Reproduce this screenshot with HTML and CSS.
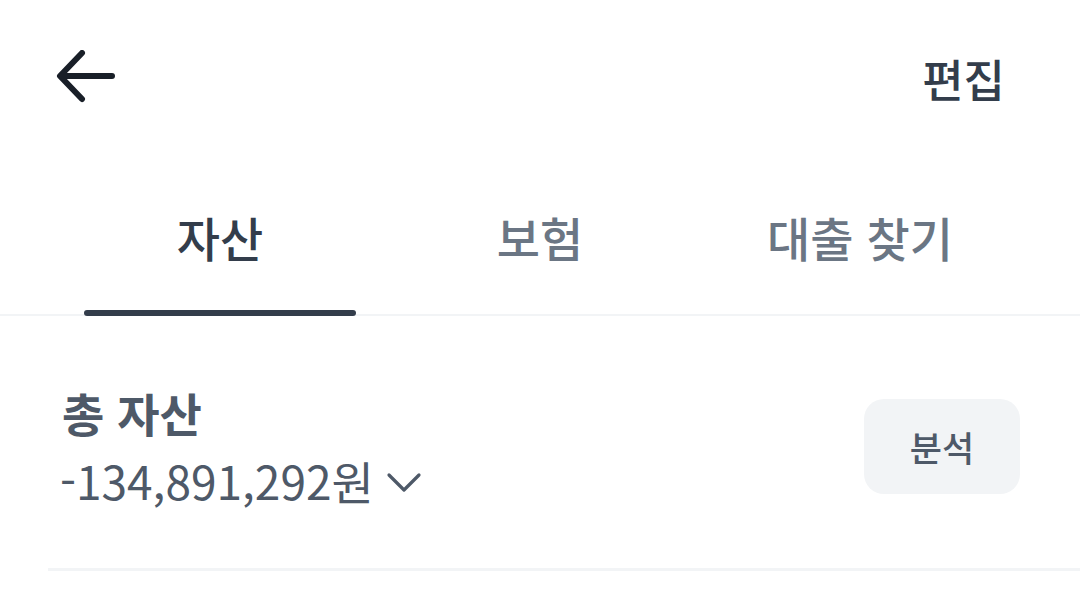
FILE: index.html
```html
<!DOCTYPE html>
<html lang="ko">
<head>
    <meta charset="UTF-8">
    <meta name="viewport" content="width=device-width, initial-scale=1.0">
    <title>자산</title>
    <link rel="stylesheet" href="styles.css">
</head>
<body>

    <!-- Top bar -->
    <header class="top-bar">
        <button class="back-btn" aria-label="뒤로">
            <svg width="60" height="56" viewBox="0 0 60 56" fill="none">
                <path d="M26 3 L4 26 L26 49" stroke="#191f28" stroke-width="6" stroke-linecap="round" stroke-linejoin="round"/>
                <path d="M6 26 H56" stroke="#191f28" stroke-width="6" stroke-linecap="round"/>
            </svg>
        </button>
        <span class="edit-btn">편집</span>
    </header>

    <!-- Tabs -->
    <nav class="tabs">
        <div class="tab active">
            <span class="tab-label">자산</span>
            <div class="tab-indicator"></div>
        </div>
        <div class="tab">
            <span class="tab-label">보험</span>
            <div class="tab-indicator"></div>
        </div>
        <div class="tab">
            <span class="tab-label">대출 찾기</span>
            <div class="tab-indicator"></div>
        </div>
    </nav>

    <!-- Total assets -->
    <section class="summary">
        <div class="summary-text">
            <h2 class="summary-title">총 자산</h2>
            <div class="summary-amount">
                -134,891,292원
                <svg class="chevron" width="36" height="22" viewBox="0 0 36 22" fill="none">
                    <path d="M3 4 L18 19 L33 4" stroke="#4e5968" stroke-width="3.2" stroke-linecap="round" stroke-linejoin="round"/>
                </svg>
            </div>
        </div>
        <button class="analyze-btn">분석</button>
    </section>

    <div class="divider"></div>

</body>
</html>
```

FILE: styles.css
```css
/* Base */
body {
    font-family: "Noto Sans CJK KR", "Noto Sans", sans-serif;
    background-color: #fff;
    margin: 0;
    padding: 0;
    color: #333d4b;
    width: 1080px;
    overflow: hidden;
}

button {
    font-family: inherit;
    border: none;
    background: none;
    padding: 0;
    cursor: pointer;
}

/* Top bar */
.top-bar {
    height: 156px;
    display: flex;
    align-items: center;
    justify-content: space-between;
    padding: 0 75px 0 56px;
}

.back-btn {
    display: flex;
}

.edit-btn {
    font-size: 45px;
    font-weight: 500;
    color: #333d4b;
}

/* Tabs */
.tabs {
    display: flex;
    padding: 0 60px;
    border-bottom: 2px solid #f2f4f6;
}

.tab {
    flex: 1;
    display: flex;
    flex-direction: column;
    align-items: center;
    padding-top: 48px;
}

.tab-label {
    font-size: 47px;
    font-weight: 500;
    line-height: 66px;
    color: #6b7684;
}

.tab-indicator {
    align-self: stretch;
    margin: 40px 24px -2px;
    height: 6px;
    border-radius: 3px;
}

.tab.active .tab-label {
    color: #333d4b;
}

.tab.active .tab-indicator {
    background-color: #333d4b;
}

/* Summary */
.summary {
    display: flex;
    align-items: center;
    justify-content: space-between;
    padding: 64px 60px 0 62px;
    height: 196px;
    box-sizing: border-box;
}

.summary-text {
    display: flex;
    flex-direction: column;
}

.summary-title {
    margin: 0;
    font-size: 46px;
    font-weight: 700;
    line-height: 62px;
    color: #4e5968;
}

.summary-amount {
    display: flex;
    align-items: center;
    gap: 12px;
    font-size: 46px;
    line-height: 62px;
    color: #4e5968;
    margin-left: -2px;
    margin-top: 6px;
}

.chevron {
    margin-top: 4px;
}

.analyze-btn {
    width: 156px;
    height: 95px;
    border-radius: 20px;
    background-color: #f2f4f6;
    font-size: 35px;
    font-weight: 500;
    color: #4e5968;
}

.divider {
    height: 3px;
    margin-left: 48px;
    background-color: #f2f4f6;
    margin-top: 56px;
}
```
